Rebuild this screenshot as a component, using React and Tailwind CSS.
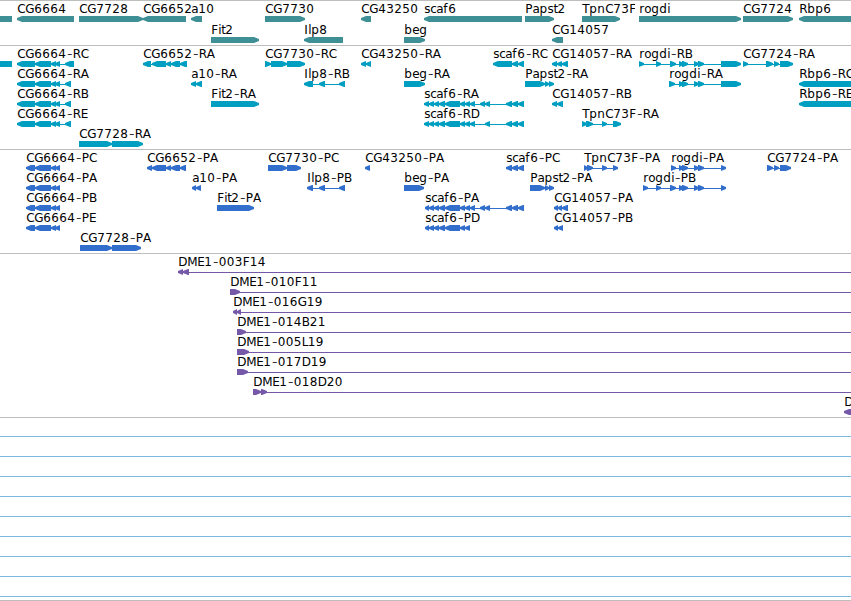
import React from "react";

const WIDTH = 851;

// Fixed advance of each glyph in the label face, in pixels.
const ADVANCE = {
  C: 8, G: 9, R: 8, A: 9, B: 8, P: 7.3, E: 7, D: 9, M: 10, F: 7, T: 7, I: 4, L: 6,
  "-": 6.5, a: 7, b: 8, c: 6, d: 8, e: 7, f: 5, g: 8, i: 3, l: 3, n: 8, o: 7, p: 8,
  r: 5, s: 6, t: 4,
};

const CG6664_R = [[17, 35], [35, 51], [51, 56], [55, 60]];
const CG6664_P = [[26, 35], [35, 51], [51, 56], [55, 60]];
const SCAF6_MID = [[429, 434], [434, 439], [439, 445], [445, 460], [460, 465], [465, 470]];
const SCAF6_END = [[506, 512], [512, 518], [518, 524]];
const ROGDI_MID = [[679, 684], [682, 688], [694, 699], [698, 704]];

// Feature: [label, label x, row, strand, exons]
const genes = [
  ["", 0, 0, 0, [[-5, 12]]],
  ["CG6664", 17, 0, -1, [[17, 74]]],
  ["CG7728", 79, 0, 1, [[79, 143]]],
  ["CG6652", 143, 0, -1, [[143, 186]]],
  ["a10", 191, 0, -1, [[191, 202]]],
  ["CG7730", 265, 0, 1, [[265, 305]]],
  ["CG43250", 361, 0, -1, [[361, 371]]],
  ["scaf6", 424, 0, -1, [[424, 522]]],
  ["Papst2", 525, 0, 1, [[525, 554]]],
  ["TpnC73F", 582, 0, 1, [[582, 620]], 635],
  ["rogdi", 639, 0, 1, [[639, 741]]],
  ["CG7724", 743, 0, 1, [[743, 793]]],
  ["Rbp6", 799, 0, -1, [[799, 860]]],
  ["Fit2", 211, 1, 1, [[211, 259]]],
  ["Ilp8", 304, 1, -1, [[304, 343]]],
  ["beg", 404, 1, 1, [[404, 425]]],
  ["CG14057", 552, 1, -1, [[552, 563]]],
];

const transcripts = [
  ["", 0, 0, 0, [[-5, 12]]],
  ["CG6664-RC", 17, 0, -1, [...CG6664_R, [65, 74]]],
  ["CG6664-RA", 17, 1, -1, [...CG6664_R, [65, 71]]],
  ["CG6664-RB", 17, 2, -1, [...CG6664_R, [65, 71]]],
  ["CG6664-RE", 17, 3, -1, [...CG6664_R, [65, 71]]],
  ["CG7728-RA", 79, 4, 1, [[79, 112], [112, 143]]],
  ["CG6652-RA", 143, 0, -1, [[143, 151], [152, 166], [166, 171], [171, 180], [180, 187]]],
  ["a10-RA", 191, 1, -1, [[191, 196], [196, 202]]],
  ["Fit2-RA", 211, 2, 1, [[211, 259]]],
  ["CG7730-RC", 265, 0, 1, [[265, 271], [271, 287], [287, 305]]],
  ["Ilp8-RB", 304, 1, -1, [[304, 313], [319, 325], [339, 345]]],
  ["CG43250-RA", 361, 0, -1, [[361, 366], [366, 371]]],
  ["beg-RA", 404, 1, 1, [[404, 425]]],
  ["scaf6-RC", 493, 0, -1, [[493, 512], [512, 518], [518, 524]]],
  ["CG14057-RA", 552, 0, -1, [[552, 557], [557, 562], [562, 568]]],
  ["Papst2-RA", 525, 1, 1, [[525, 545], [545, 549], [549, 554]]],
  ["scaf6-RA", 424, 2, -1, [[424, 429], ...SCAF6_MID, [470, 475], [480, 485], [485, 490], ...SCAF6_END]],
  ["scaf6-RD", 424, 3, -1, [[424, 429], ...SCAF6_MID, [470, 475], [485, 490], ...SCAF6_END]],
  ["CG14057-RB", 552, 2, -1, [[552, 557], [557, 563]]],
  ["TpnC73F-RA", 582, 3, 1, [[582, 587], [586, 593], [602, 607], [613, 621]]],
  ["rogdi-RB", 639, 0, 1, [[639, 644], [656, 661], [670, 676], ...ROGDI_MID, [721, 741]]],
  ["rogdi-RA", 669, 1, 1, [[669, 675], ...ROGDI_MID, [721, 741]]],
  ["CG7724-RA", 743, 0, 1, [[743, 748], [766, 773], [774, 779], [780, 793]]],
  ["Rbp6-RC", 799, 1, -1, [[799, 860]]],
  ["Rbp6-RE", 799, 2, -1, [[799, 860]]],
];

const proteins = [
  ["CG6664-PC", 26, 0, -1, CG6664_P],
  ["CG6664-PA", 26, 1, -1, CG6664_P],
  ["CG6664-PB", 26, 2, -1, CG6664_P],
  ["CG6664-PE", 26, 3, -1, CG6664_P],
  ["CG7728-PA", 80, 4, 1, [[80, 112], [112, 141]]],
  ["CG6652-PA", 147, 0, -1, [[147, 152], [152, 166], [166, 171], [171, 180], [180, 186]]],
  ["a10-PA", 192, 1, -1, [[192, 196], [196, 201]]],
  ["Fit2-PA", 217, 2, 1, [[217, 254]]],
  ["CG7730-PC", 268, 0, 1, [[268, 287], [287, 301]]],
  ["Ilp8-PB", 307, 1, -1, [[307, 313], [319, 325], [339, 345]]],
  ["CG43250-PA", 365, 0, -1, [[365, 370]]],
  ["beg-PA", 404, 1, 1, [[404, 424]]],
  ["scaf6-PC", 506, 0, -1, SCAF6_END],
  ["TpnC73F-PA", 584, 0, 1, [[584, 588], [587, 593], [602, 607], [613, 618]]],
  ["Papst2-PA", 530, 1, 1, [[530, 545], [545, 549], [549, 554]]],
  ["scaf6-PA", 425, 2, -1, [[425, 429], ...SCAF6_MID, [470, 475], [480, 485], [485, 490], ...SCAF6_END]],
  ["scaf6-PD", 425, 3, -1, [[425, 429], ...SCAF6_MID]],
  ["CG14057-PA", 554, 2, -1, [[554, 558], [558, 562], [562, 568]]],
  ["CG14057-PB", 554, 3, -1, [[554, 558], [558, 563]]],
  ["rogdi-PA", 671, 0, 1, [[671, 676], ...ROGDI_MID, [721, 726]]],
  ["rogdi-PB", 643, 1, 1, [[643, 648], [656, 661], [670, 676], ...ROGDI_MID, [721, 726]]],
  ["CG7724-PA", 767, 0, 1, [[767, 773], [774, 779], [780, 791]]],
];

const clones = [
  ["DME1-003F14", 178, 0, -1, [[178, 183], [183, 189], [900, 910]]],
  ["DME1-010F11", 230, 1, 1, [[230, 240], [900, 910]]],
  ["DME1-016G19", 233, 2, -1, [[233, 237], [237, 241], [900, 910]]],
  ["DME1-014B21", 237, 3, 1, [[237, 246], [900, 910]]],
  ["DME1-005L19", 237, 4, 1, [[237, 249], [900, 910]]],
  ["DME1-017D19", 237, 5, 1, [[237, 248], [900, 910]]],
  ["DME1-018D20", 253, 6, 1, [[253, 261], [261, 267], [900, 910]]],
  ["D", 844, 7, -1, [[844, 860]]],
];

function Label({ text, x, y }) {
  let pen = x + 0.2;
  const xs = [...text].map((ch) => {
    const at = ch === "-" ? pen + 0.9 : pen;
    pen += ADVANCE[ch] ?? 8;
    return at;
  });
  const dash = text.indexOf("-");
  return (
    <text x={xs.join(" ")} y={y} className="fill-black text-[12px]">
      {dash < 0 ? text : (
        <>
          {text.slice(0, dash)}
          <tspan dy={0.8} className="font-['Open_Sans',sans-serif] text-[17px] font-light">-</tspan>
          <tspan dy={-0.8}>{text.slice(dash + 1)}</tspan>
        </>
      )}
    </text>
  );
}

function exonPoints([a, b], y, strand) {
  if (strand === 0) return `${a},${y} ${b},${y} ${b},${y + 6} ${a},${y + 6}`;
  const head = Math.min(5, b - a);
  if (strand > 0) {
    const n = b - head;
    return `${a},${y} ${n},${y} ${b},${y + 2} ${b},${y + 4} ${n},${y + 6} ${a},${y + 6}`;
  }
  const n = a + head;
  return `${b},${y} ${n},${y} ${a},${y + 2} ${a},${y + 4} ${n},${y + 6} ${b},${y + 6}`;
}

function Track({ features, height, first, step, color }) {
  return (
    <section className="border-t border-[#bebebe]">
      <svg width={WIDTH} height={height} className={`block overflow-visible ${color}`}>
        {features.map(([label, x, row, strand, exons, clip], i) => {
          const y = first + row * step;
          const start = exons[0][0];
          const end = exons[exons.length - 1][1];
          return (
            <g key={i}>
              {exons.length > 1 && (
                <rect x={start} y={y + 3} width={end - start} height={1} shapeRendering="crispEdges" />
              )}
              {exons.map((e, j) => (
                <polygon key={j} points={exonPoints(e, y, strand)} />
              ))}
              {label && <Label text={label} x={x} y={y - 3} />}
              {clip && <rect x={clip} y={y - 14} width={3} height={12} className="fill-white" />}
            </g>
          );
        })}
      </svg>
    </section>
  );
}

export default function App() {
  return (
    <main className="flex h-[601px] w-[851px] flex-col overflow-hidden bg-white font-['DejaVu_Sans',sans-serif]">
      <Track features={genes} height={44} first={15} step={21} color="fill-[#3f8f96]" />
      <Track features={transcripts} height={103} first={15} step={20} color="fill-[#009fc1]" />
      <Track features={proteins} height={103} first={15} step={20} color="fill-[#326ecc]" />
      <Track features={clones} height={163} first={15} step={20} color="fill-[#7559a8]" />
      <section className="border-y border-[#bebebe] pb-[3px]">
        <div className="h-[19px] border-b border-[#7eb9df]" />
        {Array.from({ length: 8 }, (_, i) => (
          <div key={i} className="h-5 border-b border-[#7eb9df]" />
        ))}
      </section>
    </main>
  );
}
